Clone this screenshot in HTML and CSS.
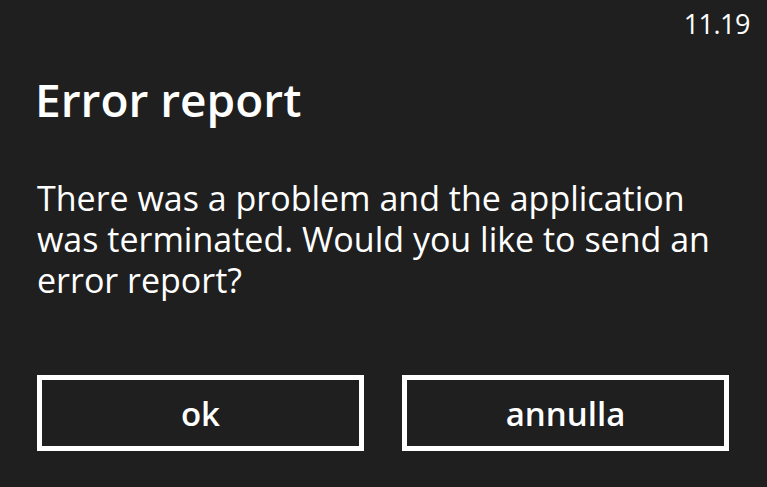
FILE: index.html
```html
<!DOCTYPE html>
<html>
<head>
<meta charset="utf-8">
<link rel="stylesheet" href="styles.css">
</head>
<body>
<div class="screen">
  <div class="status"><span class="time">11.19</span></div>
  <h1 class="title">Error report</h1>
  <p class="message">There was a problem and the application was terminated. Would you like to send an error report?</p>
  <div class="buttons">
    <button class="btn">ok</button>
    <button class="btn">annulla</button>
  </div>
</div>
</body>
</html>
```
FILE: styles.css
```css
html, body {
  margin: 0;
  padding: 0;
  background: #1f1f1f;
}
.screen {
  width: 767px;
  height: 487px;
  box-sizing: border-box;
  padding: 0 38px 0 37px;
  font-family: "Open Sans", "Noto Sans", sans-serif;
  color: #ffffff;
  display: flex;
  flex-direction: column;
}
.status {
  display: flex;
  justify-content: flex-end;
  height: 48px;
  margin-right: -21px;
}
.time {
  font-size: 27px;
  line-height: 48px;
  letter-spacing: -0.5px;
}
.title {
  margin: 21px 0 0 -2px;
  font-size: 46px;
  font-weight: 600;
  line-height: 60px;
}
.message {
  margin: 49px 0 0 0;
  font-size: 34px;
  line-height: 41px;
}
.buttons {
  display: flex;
  gap: 38px;
  margin-top: 74px;
}
.btn {
  width: 327px;
  height: 76px;
  box-sizing: border-box;
  border: 5px solid #ffffff;
  background: #1f1f1f;
  color: #ffffff;
  font-family: "Open Sans", "Noto Sans", sans-serif;
  font-size: 33px;
  font-weight: 600;
  padding: 0;
}
```
